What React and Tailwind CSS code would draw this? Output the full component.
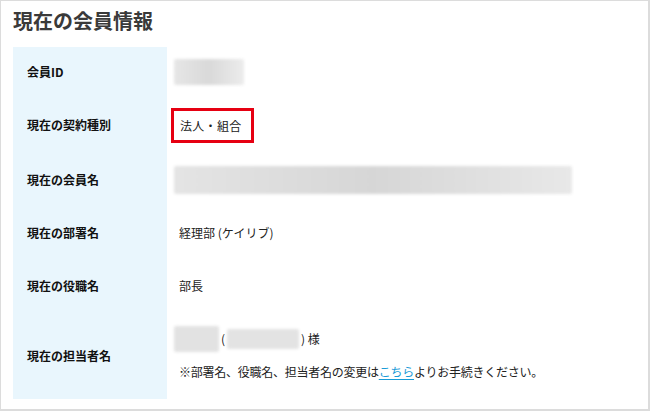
import React from "react";

const font = { fontFamily: '"Meiryo", "Noto Sans CJK JP", "Noto Sans", sans-serif' };

function Blur({ className }) {
  return <div className={"rounded-[2px] blur-[1.5px] " + className} />;
}

function Row({ label, h, children }) {
  return (
    <div className={"flex " + h}>
      <div className="w-[154px] shrink-0 bg-[#e9f6fd] flex items-center pl-[14px] text-[12px] font-bold text-[#111]">
        {label}
      </div>
      <div className="flex-1 flex flex-col justify-center pl-[7px] text-[12px] text-[#222]">
        {children}
      </div>
    </div>
  );
}

export default function App() {
  return (
    <div
      style={font}
      className="w-[650px] h-[411px] bg-white border-t border-l border-r-2 border-b-2 border-[#dcdcdc] overflow-hidden"
    >
      <div className="h-[46px] pl-[12px] pt-[6px] text-[20px] font-bold text-[#3a3a3a] leading-[28px]">
        現在の会員情報
      </div>
      <div className="pl-[12px] flex flex-col">
        <Row label="会員ID" h="h-[50px]">
          <Blur className="w-[70px] h-[26px] bg-gradient-to-r from-[#e6e6e6] via-[#d9d9d9] to-[#ececec]" />
        </Row>
        <Row label="現在の契約種別" h="h-[56px]">
          <div className="-ml-[3px] w-fit border-[3px] border-[#e60012] pl-[6px] pr-[9px] py-[6px] leading-[17px] tracking-[0.3px]">
            法人・組合
          </div>
        </Row>
        <Row label="現在の会員名" h="h-[53px]">
          <Blur className="w-[398px] h-[28px] bg-gradient-to-r from-[#e4e4e4] via-[#d6d6d6] to-[#e8e8e8]" />
        </Row>
        <Row label="現在の部署名" h="h-[53px]">
          <div className="pl-[5px]">経理部 (ケイリブ)</div>
        </Row>
        <Row label="現在の役職名" h="h-[53px]">
          <div className="pl-[5px]">部長</div>
        </Row>
        <Row label="現在の担当者名" h="h-[87px]">
          <div className="flex items-center gap-[2px] -mt-[4px]">
            <Blur className="w-[45px] h-[26px] bg-[#e2e2e2]" />
            <span>(</span>
            <Blur className="w-[72px] h-[20px] bg-[#e3e3e3]" />
            <span>) 様</span>
          </div>
          <div className="pl-[5px] mt-[11px] tracking-[-0.25px]">
            ※部署名、役職名、担当者名の変更は
            <span className="text-[#1a9bd7] underline underline-offset-2">こちら</span>
            よりお手続きください。
          </div>
        </Row>
      </div>
    </div>
  );
}
